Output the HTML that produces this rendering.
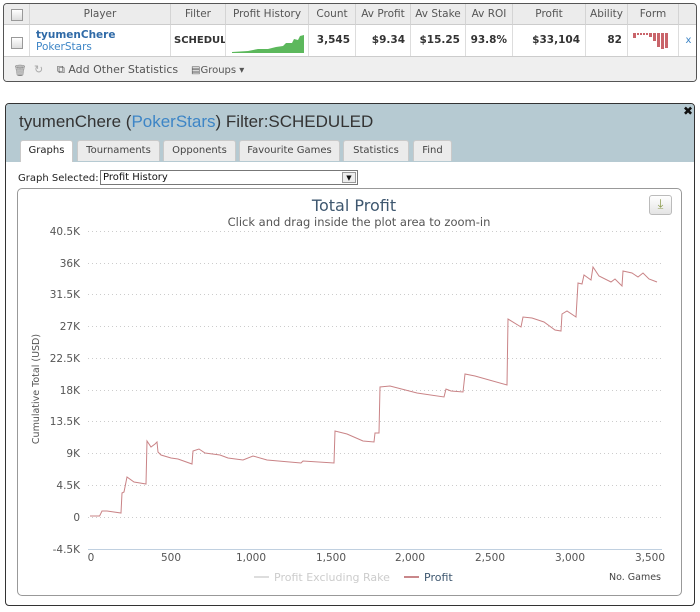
<!DOCTYPE html>
<html><head><meta charset="utf-8"><style>
*{margin:0;padding:0;box-sizing:border-box}
body{width:700px;height:612px;background:#fff;font-family:"DejaVu Sans","Liberation Sans",sans-serif;position:relative;overflow:hidden}
.a{position:absolute;white-space:nowrap}
.top{position:absolute;left:3px;top:3px;width:694px;height:79px;border:1px solid #555;border-radius:4px;overflow:hidden;background:#fff}
.hd{position:absolute;top:0;height:21px;background:#ececec;border-right:1px solid #d4d4d4;border-bottom:1px solid #ccc;font-size:10.5px;color:#555;text-align:center;line-height:20px}
.cl{position:absolute;top:21px;height:31px;border-right:1px solid #ddd;font-size:10.5px;font-weight:bold;color:#333;text-align:right;line-height:31px;padding-right:5px}
.cb{position:absolute;width:12px;height:12px;border:1px solid #999;background:linear-gradient(#fff,#ddd)}
.tab{position:absolute;top:140px;height:21px;background:#ebebeb;border:1px solid #c9c9c9;border-bottom:none;border-radius:3px 3px 0 0;font-size:10px;color:#444;text-align:center;line-height:20px}
</style></head><body>
<div class="top">
 <div class="hd" style="left:0;width:26px"></div>
 <div class="cb" style="left:7px;top:5px"></div>
 <div class="hd" style="left:26px;width:141px">Player</div>
 <div class="hd" style="left:167px;width:55px">Filter</div>
 <div class="hd" style="left:222px;width:83px">Profit History</div>
 <div class="hd" style="left:305px;width:47px">Count</div>
 <div class="hd" style="left:352px;width:55px">Av Profit</div>
 <div class="hd" style="left:407px;width:55px">Av Stake</div>
 <div class="hd" style="left:462px;width:47px">Av ROI</div>
 <div class="hd" style="left:509px;width:73px">Profit</div>
 <div class="hd" style="left:582px;width:42px">Ability</div>
 <div class="hd" style="left:624px;width:51px">Form</div>
 <div class="hd" style="left:675px;width:19px;border-right:none"></div>
 <div class="cl" style="left:0;width:26px"></div>
 <div class="cb" style="left:7px;top:33px"></div>
 <div class="cl" style="left:26px;width:141px;text-align:left;line-height:12px;padding:4px 0 0 6px"><span style="color:#2f6aa7">tyumenChere</span><br><span style="color:#3d85c6;font-weight:normal">PokerStars</span></div>
 <div class="cl" style="left:167px;width:55px;text-align:left;padding-left:3px;overflow:hidden;font-size:10px">SCHEDUL</div>
 <div class="cl" style="left:222px;width:83px;padding:0">
  <svg width="80" height="31" style="position:absolute;left:2px;top:0"><path d="M4,27 L20,26 L30,24 L40,24 L48,22 L55,21 L58,18 L64,18 L66,14 L70,15 L72,11 L76,10 L76,28 L4,28Z" fill="#5cb85c"/></svg></div>
 <div class="cl" style="left:305px;width:47px">3,545</div>
 <div class="cl" style="left:352px;width:55px">$9.34</div>
 <div class="cl" style="left:407px;width:55px">$15.25</div>
 <div class="cl" style="left:462px;width:47px">93.8%</div>
 <div class="cl" style="left:509px;width:73px">$33,104</div>
 <div class="cl" style="left:582px;width:42px">82</div>
 <div class="cl" style="left:624px;width:51px">
  <svg width="50" height="31" style="position:absolute;left:0;top:0"><g fill="#c9646a"><rect x="5" y="8" width="3" height="5"/><rect x="9" y="8" width="2" height="2"/><rect x="12" y="8" width="2" height="2"/><rect x="15" y="8" width="2" height="2"/><rect x="18" y="8" width="2" height="2"/><rect x="21" y="8" width="3" height="4"/><rect x="25" y="8" width="3" height="8"/><rect x="29" y="8" width="3" height="14"/><rect x="33" y="8" width="3" height="16"/><rect x="37" y="8" width="3" height="15"/></g></svg></div>
 <div class="cl" style="left:675px;width:19px;border:none;color:#3d85c6;font-weight:normal;text-align:center;padding:0;font-size:10px">x</div>
 <div style="position:absolute;left:0;top:52px;width:694px;height:27px;background:#efefef;border-top:1px solid #ccc"></div>
 <div class="a" style="left:9px;top:60px;font-size:11px;color:#888">&#x1F5D1;</div>
 <div class="a" style="left:30px;top:59px;font-size:11px;color:#aaa">&#x21BB;</div>
 <div class="a" style="left:53px;top:59px;font-size:11px;color:#555">⧉ Add Other Statistics</div>
 <div class="a" style="left:187px;top:61px;font-size:10px;color:#555">▤Groups ▾</div>
</div>

<div style="position:absolute;left:5px;top:103px;width:690px;height:503px;border:1px solid #333;border-radius:4px;overflow:hidden;background:#fff">
 <div style="position:absolute;left:0;top:0;width:690px;height:58px;background:#b6cad2"></div>
</div>
<div class="a" style="left:19px;top:112px;font-family:'Liberation Sans',sans-serif;font-size:17px;color:#333">tyumenChere (<span style="color:#3d85c6">PokerStars</span>) Filter:SCHEDULED</div>
<div class="a" style="left:683px;top:104px;font-size:12px;font-weight:bold;color:#111">✖</div>
<div class="tab" style="left:20px;width:53px;background:#fff;color:#222;height:22px">Graphs</div>
<div class="tab" style="left:77px;width:83px">Tournaments</div>
<div class="tab" style="left:163px;width:73px">Opponents</div>
<div class="tab" style="left:239px;width:101px">Favourite Games</div>
<div class="tab" style="left:343px;width:66px">Statistics</div>
<div class="tab" style="left:413px;width:39px">Find</div>
<div class="a" style="left:18px;top:173px;font-size:10px;color:#222">Graph Selected:</div>
<div style="position:absolute;left:100px;top:170px;width:258px;height:15px;border:1px solid #777;background:#fff;font-size:10px;line-height:13px;padding-left:2px;color:#111">Profit History
 <div style="position:absolute;right:1px;top:1px;width:14px;height:11px;border:1px solid #999;background:#eee;font-size:7px;text-align:center;line-height:10px">▼</div></div>
<div style="position:absolute;left:17px;top:188px;width:665px;height:408px;border:1px solid #999;border-radius:5px"></div>
<div style="position:absolute;left:649px;top:195px;width:23px;height:20px;border:1px solid #bbb;border-radius:3px;background:linear-gradient(#fff,#e4e4e4);color:#8a9a4a;font-size:13px;text-align:center;line-height:18px">⤓</div>

<svg width="700" height="612" style="position:absolute;left:0;top:0" font-family="DejaVu Sans, sans-serif">
 <text x="354" y="211" text-anchor="middle" font-size="16" fill="#3e576f">Total Profit</text>
 <text x="359" y="226" text-anchor="middle" font-size="11.5" fill="#555">Click and drag inside the plot area to zoom-in</text>
 <g stroke="#ccc" stroke-dasharray="1,3" stroke-width="1">
  <line x1="88" x2="662" y1="231.5" y2="231.5"/><line x1="88" x2="662" y1="263.5" y2="263.5"/><line x1="88" x2="662" y1="294.5" y2="294.5"/><line x1="88" x2="662" y1="326.5" y2="326.5"/><line x1="88" x2="662" y1="358.5" y2="358.5"/><line x1="88" x2="662" y1="390.5" y2="390.5"/><line x1="88" x2="662" y1="421.5" y2="421.5"/><line x1="88" x2="662" y1="453.5" y2="453.5"/><line x1="88" x2="662" y1="485.5" y2="485.5"/><line x1="88" x2="662" y1="517.5" y2="517.5"/>
 </g>
 <line x1="88" x2="662" y1="549.5" y2="549.5" stroke="#c0d0e0"/>
 <g font-size="10.5" fill="#555" text-anchor="end">
  <text x="80" y="235">40.5K</text><text x="80" y="267">36K</text><text x="80" y="298">31.5K</text><text x="80" y="330">27K</text><text x="80" y="362">22.5K</text><text x="80" y="394">18K</text><text x="80" y="425">13.5K</text><text x="80" y="457">9K</text><text x="80" y="489">4.5K</text><text x="80" y="521">0</text><text x="80" y="553">-4.5K</text>
 </g>
 <text transform="translate(39,389) rotate(-90)" text-anchor="middle" font-size="9.5" fill="#555">Cumulative Total (USD)</text>
 <g font-size="10.5" fill="#555" text-anchor="middle">
  <text x="91" y="561">0</text><text x="171" y="561">500</text><text x="251" y="561">1,000</text><text x="331" y="561">1,500</text><text x="410" y="561">2,000</text><text x="490" y="561">2,500</text><text x="570" y="561">3,000</text><text x="650" y="561">3,500</text>
 </g>
 <text x="661" y="580" text-anchor="end" font-size="9.5" fill="#444">No. Games</text>
 <line x1="254" x2="269" y1="577" y2="577" stroke="#ddd" stroke-width="2"/>
 <text x="274" y="581" font-size="11" fill="#ccc">Profit Excluding Rake</text>
 <line x1="404" x2="419" y1="577" y2="577" stroke="#c9878a" stroke-width="2"/>
 <text x="424" y="581" font-size="11" fill="#3e576f">Profit</text>
 <polyline fill="none" stroke="#c98386" stroke-width="1" points="90,516 99.6,516 102,511 107,511 121,513 122,493 124,492 127,477 134,482 140,483 146,484 147,441 151,447 155,444 157,442 158,452 161,455 171,458 178,459 192,464 193,451 199,449 205,453 220,455 228,458 243,460 253,456 267,460 301,463 303,461 334,463 335,431 347,434 363,441 374,442 375,433 379,433 380,387 390,386 417,393 444,397 446,389 451,391 463,392 465,374 475,376 507,385 508,319 521,327 523,317 532,318 544,322 555,330 561,331 562,314 567,311 576,317 578,283 582,284 584,275 591,280 593,267 599,276 611,282 615,279 622,286 623,271 632,273 638,277 643,273 649,279 657,282"/>
</svg>
</body></html>
